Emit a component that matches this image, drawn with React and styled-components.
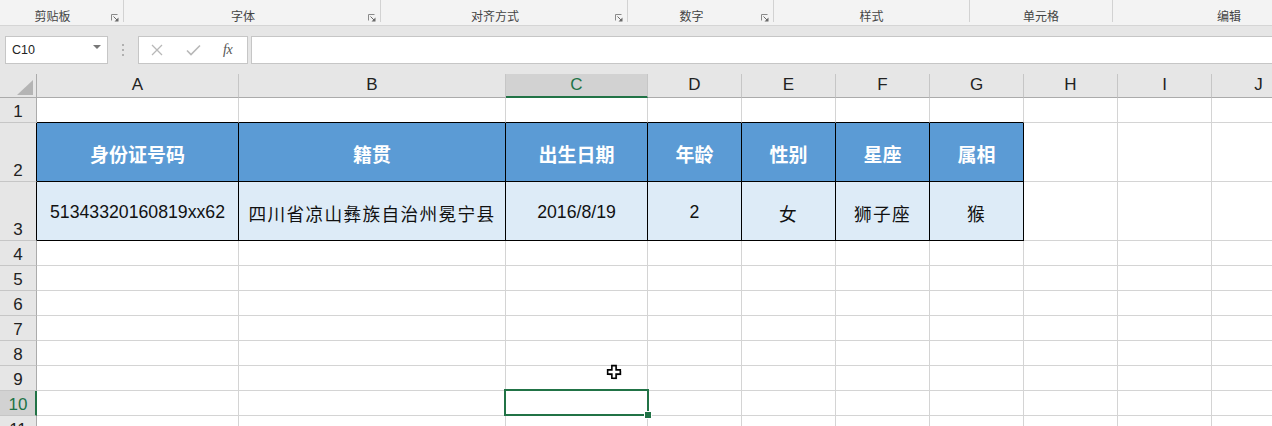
import React from 'react';
import styled, { createGlobalStyle } from 'styled-components';

const GlobalStyle = createGlobalStyle`
  html, body { margin: 0; padding: 0; background: #ffffff; overflow: hidden; }
  * { box-sizing: border-box; }
`;

const Window = styled.div`
  position: relative;
  width: 1272px;
  height: 426px;
  overflow: hidden;
  display: flex;
  flex-direction: column;
  background: #e6e6e6;
  font-family: "Liberation Sans", "Noto Sans CJK SC", sans-serif;
`;

/* ---------- ribbon group labels ---------- */
const Ribbon = styled.div`
  flex: none;
  height: 26px;
  display: flex;
  align-items: flex-start;
  background: #f3f3f3;
  border-bottom: 1px solid #d5d5d5;
  overflow: hidden;
`;

const Group = styled.div`
  flex: none;
  width: ${p => p.$w}px;
  height: 22px;
  display: flex;
  align-items: flex-end;
  border-right: ${p => (p.$last ? 'none' : '1px solid #d2d2d2')};
`;

const GroupLabel = styled.div`
  flex: 1;
  text-align: center;
  font-family: "Noto Sans CJK SC", sans-serif;
  font-size: 12px;
  line-height: 12px;
  color: #444444;
  white-space: nowrap;
`;

const LauncherBox = styled.span`
  flex: none;
  width: 8px;
  height: 8px;
  margin: 0 4px 0 6px;
  display: flex;
`;

const Launcher = () => (
  <LauncherBox>
    <svg width="8" height="8" viewBox="0 0 8 8">
      <path d="M0.5 6.5 V0.5 H6.5" fill="none" stroke="#8a8a8a" strokeWidth="1" />
      <path d="M2.5 2.5 L6.5 6.5" stroke="#6a6a6a" strokeWidth="1" />
      <path d="M3.5 7.5 H7.5 V3.5 Z" fill="#6a6a6a" />
    </svg>
  </LauncherBox>
);

/* ---------- formula bar ---------- */
const FormulaBar = styled.div`
  flex: none;
  display: flex;
  align-items: center;
  padding: 10px 0 10px 5px;
`;

const NameBox = styled.div`
  flex: none;
  width: 103px;
  height: 28px;
  display: flex;
  align-items: center;
  justify-content: space-between;
  padding: 0 6px 0 6px;
  background: #ffffff;
  border: 1px solid #c6c6c6;
  font-size: 12.5px;
  color: #222222;
`;

const DropArrow = styled.span`
  width: 0;
  height: 0;
  border-left: 4px solid transparent;
  border-right: 4px solid transparent;
  border-top: 4px solid #777777;
  margin-top: -6px;
`;

const Grip = styled.div`
  flex: none;
  width: 30px;
  display: flex;
  flex-direction: column;
  align-items: center;
  gap: 3px;
`;

const GripDot = styled.span`
  width: 2px;
  height: 2px;
  background: #b0b0b0;
`;

const ButtonsBox = styled.div`
  flex: none;
  width: 110px;
  height: 28px;
  margin-right: 3px;
  display: flex;
  align-items: center;
  padding-left: 12px;
  gap: 23px;
  background: #ffffff;
  border: 1px solid #c6c6c6;
`;

const FxLabel = styled.span`
  font-family: "Liberation Serif", "DejaVu Serif", serif;
  font-style: italic;
  font-size: 14px;
  color: #555555;
  margin-left: -1px;
  letter-spacing: -0.5px;
`;

const FormulaInput = styled.div`
  flex: 1;
  height: 28px;
  background: #ffffff;
  border: 1px solid #c6c6c6;
  border-right: none;
`;

/* ---------- sheet ---------- */
const Sheet = styled.div`
  flex: none;
  display: grid;
  grid-template-columns: 37px ${p => p.$cols.map(w => `${w}px`).join(' ')};
  grid-template-rows: 24px ${p => p.$rows.map(h => `${h}px`).join(' ')};
  background: #ffffff;
`;

const Corner = styled.div`
  position: relative;
  background: #e6e6e6;
  border-right: 1px solid #ababab;
  border-bottom: 1px solid #ababab;
  display: flex;
  align-items: flex-end;
  justify-content: flex-end;
  padding: 0 3px 2px 0;
`;

const CornerTriangle = styled.span`
  width: 16px;
  height: 15px;
  background: #b4b4b4;
  clip-path: polygon(100% 0, 100% 100%, 0 100%);
`;

const ColHeader = styled.div`
  display: flex;
  align-items: center;
  justify-content: center;
  padding-bottom: ${p => (p.$active ? '0' : '1px')};
  background: ${p => (p.$active ? '#d2d2d2' : '#e6e6e6')};
  border-right: 1px solid #c6c6c6;
  border-bottom: ${p => (p.$active ? '2px solid #217346' : '1px solid #ababab')};
  color: ${p => (p.$active ? '#217346' : '#222222')};
  font-size: 17px;
`;

const RowHeader = styled.div`
  display: flex;
  align-items: flex-end;
  justify-content: center;
  line-height: 20px;
  background: ${p => (p.$active ? '#d2d2d2' : '#e6e6e6')};
  border-right: ${p =>
    p.$active ? '2px solid #217346' : p.$edge ? '1px solid #000000' : '1px solid #ababab'};
  border-bottom: 1px solid #c6c6c6;
  color: ${p => (p.$active ? '#217346' : '#222222')};
  font-size: 17px;
  padding-left: ${p => (p.$active ? '1px' : '0')};
`;

const cellBg = { plain: '#ffffff', head: '#5b9bd5', data: '#ddebf7' };

const Cell = styled.div`
  position: relative;
  z-index: ${p => (p.$selected ? 2 : 'auto')};
  display: flex;
  align-items: center;
  justify-content: center;
  padding-top: ${p => (p.$kind === 'plain' ? '0' : '3px')};
  white-space: nowrap;
  background: ${p => cellBg[p.$kind]};
  border-right: 1px solid ${p => (p.$kind === 'plain' ? '#d4d4d4' : '#000000')};
  border-bottom: 1px solid
    ${p => (p.$kind === 'plain' && !p.$edgeBottom ? '#d4d4d4' : '#000000')};
  color: ${p => (p.$kind === 'head' ? '#ffffff' : '#111111')};
  font-family: ${p =>
    p.$kind === 'head'
      ? '"Noto Sans CJK SC", sans-serif'
      : '"Liberation Sans", "Noto Sans CJK SC", sans-serif'};
  font-weight: ${p => (p.$kind === 'head' ? 700 : 400)};
  font-size: ${p => (p.$kind === 'head' ? '19px' : '17.7px')};
  letter-spacing: ${p => (p.$cjk ? '1.3px' : '0')};
`;

const SelectionFrame = styled.div`
  position: absolute;
  top: -2px;
  left: -2px;
  right: -2px;
  bottom: -1px;
  border: 2px solid #217346;
  pointer-events: none;
`;

const FillHandle = styled.span`
  position: absolute;
  right: -4px;
  bottom: -4px;
  width: 6px;
  height: 6px;
  background: #217346;
  outline: 1px solid #ffffff;
`;

const CursorMark = styled.svg`
  position: absolute;
  left: 605px;
  top: 363px;
`;

const groups = [
  { label: '剪贴板', w: 124, launcher: true },
  { label: '字体', w: 257, launcher: true },
  { label: '对齐方式', w: 247, launcher: true },
  { label: '数字', w: 146, launcher: true },
  { label: '样式', w: 196 },
  { label: '单元格', w: 143 },
  { label: '编辑', w: 232, last: true },
];

const colNames = ['A', 'B', 'C', 'D', 'E', 'F', 'G', 'H', 'I', 'J'];
const colWidths = [202, 267, 142, 94, 94, 94, 94, 94, 94, 94];
const rowHeights = [25, 59, 59, 25, 25, 25, 25, 25, 25, 25, 25];

const headRow = ['身份证号码', '籍贯', '出生日期', '年龄', '性别', '星座', '属相'];
const dataRow = ['51343320160819xx62', '四川省凉山彝族自治州冕宁县', '2016/8/19', '2', '女', '狮子座', '猴'];

const ACTIVE_COL = 2;
const ACTIVE_ROW = 10;
const hasCjk = s => /[\u4e00-\u9fff]/.test(s);

export default function App() {
  return (
    <>
      <GlobalStyle />
      <Window>
        <Ribbon>
          {groups.map(g => (
            <Group key={g.label} $w={g.w} $last={g.last}>
              <GroupLabel>{g.label}</GroupLabel>
              {g.launcher && <Launcher />}
            </Group>
          ))}
        </Ribbon>

        <FormulaBar>
          <NameBox>
            <span>C10</span>
            <DropArrow />
          </NameBox>
          <Grip>
            <GripDot />
            <GripDot />
            <GripDot />
          </Grip>
          <ButtonsBox>
            <svg width="12" height="12" viewBox="0 0 12 12">
              <path d="M1 1 L11 11 M11 1 L1 11" stroke="#b8b8b8" strokeWidth="1.3" />
            </svg>
            <svg width="15" height="12" viewBox="0 0 15 12">
              <path d="M1 6.5 L5 10.5 L14 1.5" fill="none" stroke="#b8b8b8" strokeWidth="1.6" />
            </svg>
            <FxLabel>fx</FxLabel>
          </ButtonsBox>
          <FormulaInput />
        </FormulaBar>

        <Sheet $cols={colWidths} $rows={rowHeights}>
          <Corner>
            <CornerTriangle />
          </Corner>
          {colNames.map((c, i) => (
            <ColHeader key={c} $active={i === ACTIVE_COL}>
              {c}
            </ColHeader>
          ))}
          {rowHeights.map((_, ri) => {
            const n = ri + 1;
            return (
              <React.Fragment key={n}>
                <RowHeader $active={n === ACTIVE_ROW} $edge={n === 2 || n === 3}>
                  {n}
                </RowHeader>
                {colNames.map((c, ci) => {
                  let kind = 'plain';
                  let text = '';
                  if (ci < 7 && n === 2) {
                    kind = 'head';
                    text = headRow[ci];
                  } else if (ci < 7 && n === 3) {
                    kind = 'data';
                    text = dataRow[ci];
                  }
                  const selected = n === ACTIVE_ROW && ci === ACTIVE_COL;
                  return (
                    <Cell
                      key={c + n}
                      $kind={kind}
                      $selected={selected}
                      $edgeBottom={n === 1 && ci < 7}
                      $cjk={kind === 'data' && hasCjk(text)}
                    >
                      {text}
                      {selected && (
                        <SelectionFrame>
                          <FillHandle />
                        </SelectionFrame>
                      )}
                    </Cell>
                  );
                })}
              </React.Fragment>
            );
          })}
        </Sheet>

        <CursorMark width="19" height="19" viewBox="0 0 18 18">
          <path
            d="M6.5 2.5 H10.5 V6.5 H14.5 V10.5 H10.5 V14.5 H6.5 V10.5 H2.5 V6.5 H6.5 Z"
            fill="#000000"
            transform="translate(1 1)"
            opacity="0.35"
          />
          <path
            d="M6.5 2.5 H10.5 V6.5 H14.5 V10.5 H10.5 V14.5 H6.5 V10.5 H2.5 V6.5 H6.5 Z"
            fill="#ffffff"
            stroke="#000000"
            strokeWidth="1.5"
          />
        </CursorMark>
      </Window>
    </>
  );
}
